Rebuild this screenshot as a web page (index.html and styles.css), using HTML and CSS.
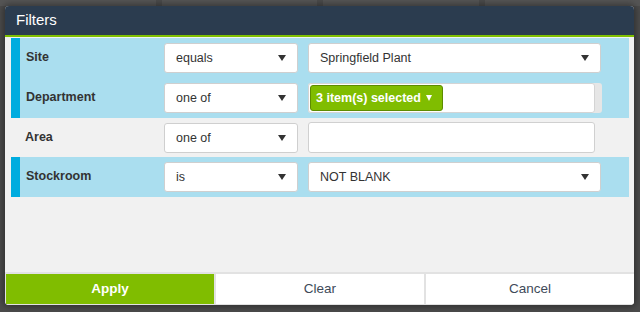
FILE: index.html
```html
<!DOCTYPE html>
<html>
<head>
<meta charset="utf-8">
<link rel="stylesheet" href="styles.css">
</head>
<body>
<div class="backdrop">
  <div class="bg-strip">
    <span class="bg-cell"></span><span class="bg-cell"></span><span class="bg-cell"></span><span class="bg-cell"></span>
  </div>
  <div class="dialog">
    <div class="dlg-header">Filters</div>
    <div class="dlg-body">
      <div class="row active">
        <span class="accent"></span>
        <span class="label">Site</span>
        <div class="select op"><span>equals</span><span class="caret"></span></div>
        <div class="select val"><span>Springfield Plant</span><span class="caret"></span></div>
      </div>
      <div class="row active">
        <span class="accent"></span>
        <span class="label">Department</span>
        <div class="select op"><span>one of</span><span class="caret"></span></div>
        <div class="multi">
          <div class="multi-box"><span class="chip">3 item(s) selected <span class="chip-caret"></span></span></div>
          <div class="multi-scroll"></div>
        </div>
      </div>
      <div class="row plain">
        <span class="accent none"></span>
        <span class="label">Area</span>
        <div class="select op"><span>one of</span><span class="caret"></span></div>
        <div class="input"></div>
      </div>
      <div class="row active">
        <span class="accent"></span>
        <span class="label">Stockroom</span>
        <div class="select op"><span>is</span><span class="caret"></span></div>
        <div class="select val"><span>NOT BLANK</span><span class="caret"></span></div>
      </div>
    </div>
    <div class="dlg-footer">
      <button class="btn apply">Apply</button>
      <button class="btn">Clear</button>
      <button class="btn">Cancel</button>
    </div>
  </div>
</div>
</body>
</html>
```

FILE: styles.css
```css
* { box-sizing: border-box; }
html, body { margin: 0; padding: 0; }
body {
  width: 640px;
  height: 312px;
  overflow: hidden;
  background: #4b4b4b;
  font-family: "Liberation Sans", Arial, sans-serif;
}
.backdrop {
  position: relative;
  width: 640px;
  height: 312px;
  padding: 6px 6px 0 5px;
}
.bg-strip {
  position: absolute;
  left: 0; top: 0; right: 0;
  height: 6px;
  display: flex;
  gap: 6px;
}
.bg-cell { flex: 1; background: #555; }
.dialog {
  position: relative;
  width: 629px;
  height: 299px;
  background: #f1f1f1;
  border-radius: 4px;
  overflow: hidden;
  display: flex;
  flex-direction: column;
  box-shadow: 0 0 6px 2px rgba(0,0,0,0.35);
}
.dlg-header {
  height: 31px;
  background: #2b3c4f;
  border-bottom: 2px solid #7fbf00;
  color: #fff;
  font-size: 15px;
  line-height: 28px;
  padding-left: 11px;
}
.dlg-body {
  flex: 1;
  padding: 1px 5px 0 6px;
}
.row {
  height: 40px;
  display: flex;
  align-items: center;
}
.row.plain { height: 39px; }
.row.active { background: #aadeef; }
.accent {
  align-self: stretch;
  width: 9px;
  background: #00acdf;
}
.accent.none { background: transparent; width: 8px; }
.label {
  width: 144px;
  padding-left: 6px;
  padding-bottom: 2px;
  font-size: 12.5px;
  font-weight: bold;
  color: #333;
}
.row.plain .label { width: 145px; }
.select {
  height: 30px;
  background: #fff;
  border: 1px solid #cfcfcf;
  border-radius: 3px;
  display: flex;
  align-items: center;
  justify-content: space-between;
  padding: 0 11px 0 11px;
  font-size: 12.5px;
  color: #333;
}
.select.op { width: 134px; margin-right: 10px; }
.select.val { width: 293px; }
.caret {
  width: 0; height: 0;
  border-left: 4px solid transparent;
  border-right: 4px solid transparent;
  border-top: 6px solid #333;
}
.multi {
  display: flex;
  height: 30px;
  background: #e6e6e6;
  border-radius: 3px;
  width: 294px;
}
.multi-box {
  width: 287px;
  height: 30px;
  background: #fff;
  border: 1px solid #d4d4d4;
  border-radius: 3px;
  padding: 1px;
  display: flex;
}
.chip {
  height: 26px;
  width: 133px;
  background: #80bd00;
  border: 1px solid #5d8c00;
  border-radius: 3px;
  color: #fff;
  font-size: 12.5px;
  font-weight: bold;
  display: flex;
  align-items: center;
  padding-left: 5px;
  gap: 5px;
}
.chip-caret {
  width: 0; height: 0;
  border-left: 3.5px solid transparent;
  border-right: 3.5px solid transparent;
  border-top: 6px solid #fff;
}
.multi-scroll { flex: 1; }
.input {
  width: 287px;
  height: 31px;
  background: #fff;
  border: 1px solid #d0d0d0;
  border-radius: 3px;
}
.dlg-footer {
  height: 33px;
  background: #e2e2e2;
  padding: 2px 1px 1px 1px;
  display: grid;
  grid-template-columns: 208px 208px 208px;
  gap: 2px;
}
.btn {
  border: none;
  margin: 0;
  background: #fff;
  font-family: inherit;
  font-size: 13.5px;
  color: #3e4a59;
  padding: 0 0 2px 0;
}
.btn.apply {
  background: #80bd00;
  color: #fff;
  font-weight: bold;
}
```
